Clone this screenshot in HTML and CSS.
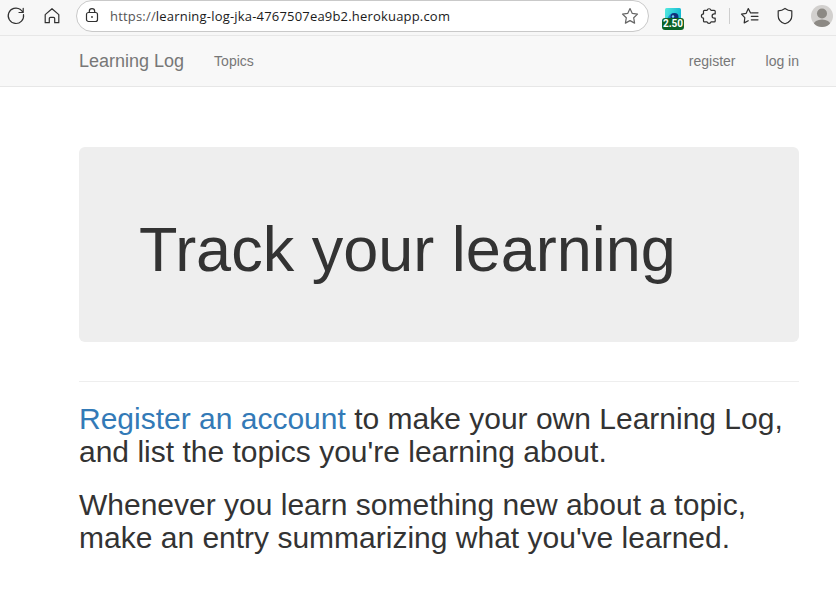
FILE: index.html
```html
<!DOCTYPE html>
<html lang="en">
<head>
<meta charset="utf-8">
<title>Learning Log</title>
<link rel="stylesheet" href="styles.css">
</head>
<body>
<div class="toolbar">
  <svg class="icon reload" viewBox="0 0 20 20"><path d="M17.500 8.500A7.700 7.700 0 1 1 14.500 3.600L17 6.200M17.200 2.300v4.200h-4.200"/></svg>
  <svg class="icon home" viewBox="0 0 20 20"><path d="M3.200 8.600 10 2.700l6.800 5.900v8.100h-4.100v-4.200a1.200 1.200 0 0 0-1.200-1.200h-3a1.200 1.200 0 0 0-1.200 1.200v4.200H3.200z"/></svg>
  <div class="address">
    <svg class="icon lock" viewBox="0 0 20 20"><rect x="4.500" y="6.500" width="11" height="9" rx="2"/><path d="M7.300 6.500V5.400a2.700 2.700 0 0 1 5.400 0v1.100"/><circle class="solid" cx="10" cy="11" r=".9"/></svg>
    <span class="url"><span class="scheme">https://</span>learning-log-jka-4767507ea9b2.herokuapp.com</span>
    <svg class="icon star" viewBox="0 0 20 20"><path d="m10 2.600 2.300 4.800 5.200.7-3.800 3.700.9 5.300-4.600-2.500-4.600 2.500.9-5.300-3.800-3.700 5.200-.7z"/></svg>
  </div>
  <div class="extension">
    <svg class="extension-art" viewBox="0 0 16 16"><defs><linearGradient id="sky" x1="0" x2="1" y1="0" y2=".3"><stop stop-color="#55eadf"/><stop offset="1" stop-color="#13b9d2"/></linearGradient></defs><rect width="16" height="16" rx="1.500" fill="url(#sky)"/><path d="M2 11Q8-1 14 11z" fill="#168bd2"/><circle cx="9.500" cy="9" r="4" fill="#122f79"/><circle cx="8" cy="8.500" r="1.200" fill="#6fd8ef"/></svg>
    <span class="badge">2.50</span>
  </div>
  <svg class="icon puzzle" viewBox="0 0 20 20"><path d="M5.500 4.300h2.600a2 2 0 0 1 3.900 0h3.200c.6 0 1 .4 1 1v2.600h-1a2.100 2.100 0 0 0 0 4.200h1v2.800c0 .6-.4 1-1 1H12a2 2 0 0 1-3.900 0H5.500c-.6 0-1-.4-1-1v-2.800a2.100 2.100 0 0 1 0-4.200V5.300c0-.6.4-1 1-1z"/></svg>
  <span class="divider"></span>
  <svg class="icon favorites" viewBox="0 0 20 20"><path d="M12 6.800 10.600 7 8.300 2.600 6.200 7.300l-4.700.8 3.300 3.600-.6 5.200 4-2.200M12 6.800h6M11.300 10.300H18M11.300 13.800H18"/></svg>
  <svg class="icon shield" viewBox="0 0 20 20"><path d="M10 2.400c2 1.500 4.300 2.300 6.800 2.400v5.100c0 3.700-2.300 6.200-6.800 7.800-4.500-1.600-6.800-4.100-6.800-7.800V4.800C5.700 4.700 8 3.900 10 2.400z"/></svg>
  <svg class="avatar" viewBox="0 0 22 22"><defs><clipPath id="disc"><circle cx="11" cy="11" r="11"/></clipPath></defs><circle cx="11" cy="11" r="11" fill="#d2d0ce"/><g fill="#8c8984" clip-path="url(#disc)"><circle cx="11" cy="8.500" r="5"/><ellipse cx="11" cy="20" rx="8.500" ry="5.500"/></g></svg>
</div>
<nav class="navbar">
  <a class="brand">Learning Log</a>
  <a class="link">Topics</a>
  <span class="account"><a class="link">register</a><a class="link">log in</a></span>
</nav>
<main class="container">
  <header class="jumbotron"><h1>Track your learning</h1></header>
  <hr>
  <h2><a class="register">Register an account</a> to make your own Learning Log, and list the topics you're learning about.</h2>
  <h2>Whenever you learn something new about a topic, make an entry summarizing what you've learned.</h2>
</main>
</body>
</html>
```

FILE: styles.css
```css
* { box-sizing: border-box; }
body {
  margin: 0;
  background: #fff;
  color: #333;
  font-family: "Liberation Sans", Arial, sans-serif;
  font-size: 14px;
  overflow: hidden;
}
.toolbar {
  display: flex;
  align-items: flex-start;
  height: 36px;
  padding-left: 6px;
  background: #f7f7f7;
  border-bottom: 1px solid #e7e7e7;
}
.icon {
  flex: none;
  width: 20px;
  height: 20px;
  margin-top: 6px;
  fill: none;
  stroke: #303030;
  stroke-width: 1.2;
  stroke-linejoin: round;
  stroke-linecap: round;
}
.icon .solid { fill: #303030; stroke: none; }
.home { margin-left: 16px; }
.address {
  display: flex;
  align-items: center;
  flex: none;
  width: 573px;
  height: 32px;
  margin-left: 14px;
  padding: 0 8px 0 5px;
  background: #fff;
  border: 1px solid #c9c9c9;
  border-radius: 16px;
}
.address .icon { margin-top: 0; }
.address .star { margin-left: auto; stroke: #666; }
.url {
  margin-left: 8px;
  color: #1b1b1b;
  font: 13px/20px "Open Sans", "Noto Sans", sans-serif;
  letter-spacing: .19px;
  white-space: nowrap;
}
.scheme { color: #555; }
.extension {
  display: flex;
  flex-direction: column;
  align-items: center;
  flex: none;
  width: 22px;
  margin: 8px 0 0 13px;
}
.extension-art { width: 16px; height: 16px; }
.badge {
  width: 22px;
  height: 12px;
  margin-top: -6px;
  z-index: 1;
  border-radius: 3px;
  background: #0b6226;
  color: #fff;
  font: bold 10px/12px Roboto, sans-serif;
  text-align: center;
}
.puzzle { margin-left: 15px; }
.divider {
  flex: none;
  width: 1px;
  height: 16px;
  margin: 8px 10px 0;
  background: #cecece;
}
.shield { margin-left: 15px; }
.avatar {
  flex: none;
  width: 22px;
  height: 22px;
  margin: 5px 0 0 16px;
}
.navbar {
  display: flex;
  align-items: center;
  height: 51px;
  padding: 0 37px 0 79px;
  background: #f8f8f8;
  border-bottom: 1px solid #e7e7e7;
  color: #777;
}
.brand { margin-right: 30px; font-size: 18px; line-height: 20px; }
.link { line-height: 20px; }
.account { display: flex; gap: 30px; margin-left: auto; }
.container { width: 720px; margin: 60px 0 0 79px; }
.jumbotron {
  padding: 68px 60px 58px;
  background: #eee;
  border-radius: 6px;
}
h1, h2 { font-weight: 500; line-height: 1.1; }
h1 { margin: 0; font-size: 63px; }
hr { margin: 39px 0 20px; border: 0; border-top: 1px solid #eee; }
h2 { margin: 20px 0; font-size: 30px; }
.register { color: #337ab7; }
```
